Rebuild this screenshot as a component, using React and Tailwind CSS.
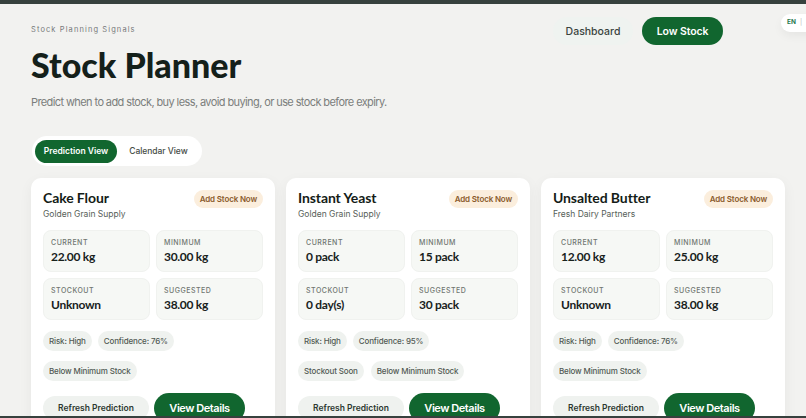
import React from 'react'

const items = [
  {
    name: 'Cake Flour', supplier: 'Golden Grain Supply', current: '22.00 kg', minimum: '30.00 kg',
    stockout: 'Unknown', suggested: '38.00 kg', confidence: '76%', soon: false,
  },
  {
    name: 'Instant Yeast', supplier: 'Golden Grain Supply', current: '0 pack', minimum: '15 pack',
    stockout: '0 day(s)', suggested: '30 pack', confidence: '95%', soon: true,
  },
  {
    name: 'Unsalted Butter', supplier: 'Fresh Dairy Partners', current: '12.00 kg', minimum: '25.00 kg',
    stockout: 'Unknown', suggested: '38.00 kg', confidence: '76%', soon: false,
  },
]

function Stat({ label, value }) {
  return (
    <div className="h-[42px] rounded-[8px] border border-[#f0f2ef] bg-[#f6f8f5] px-[7px] pt-[7px]">
      <div className="text-[7px] leading-[9px] font-medium tracking-[0.5px] text-[#6f7670]">{label}</div>
      <div className="mt-[2px] font-['Lato',sans-serif] text-[12px] leading-[16px] font-bold tracking-[-0.3px] text-[#18221c]">{value}</div>
    </div>
  )
}

function Chip({ children }) {
  return (
    <span className="flex h-[20px] items-center rounded-full bg-[#eff2ef] px-[6px] text-[8px] font-medium tracking-[-0.15px] text-[#525a54]">
      {children}
    </span>
  )
}

function Card({ item }) {
  return (
    <div className="h-[260px] w-[244px] shrink-0 rounded-[10px] bg-white px-[12px] pt-[12px] shadow-[0_4px_14px_rgba(20,40,30,0.05)]">
      <div className="flex items-start justify-between">
        <div className="font-['Lato',sans-serif] text-[14px] leading-[16px] font-bold tracking-[-0.1px] text-[#141c17]">{item.name}</div>
        <span className="flex h-[18px] items-center rounded-full bg-[#fbeedd] px-[6px] text-[8px] font-semibold tracking-[-0.15px] text-[#8a5a2c]">
          Add Stock Now
        </span>
      </div>
      <div className="text-[8.5px] leading-[12px] text-[#565e58]">{item.supplier}</div>

      <div className="mt-[10px] grid grid-cols-2 gap-[6px]">
        <Stat label="CURRENT" value={item.current} />
        <Stat label="MINIMUM" value={item.minimum} />
        <Stat label="STOCKOUT" value={item.stockout} />
        <Stat label="SUGGESTED" value={item.suggested} />
      </div>

      <div className="mt-[11px] flex gap-[6px]">
        <Chip>Risk: High</Chip>
        <Chip>Confidence: {item.confidence}</Chip>
      </div>
      <div className="mt-[10px] flex gap-[7px]">
        {item.soon && <Chip>Stockout Soon</Chip>}
        <Chip>Below Minimum Stock</Chip>
      </div>

      <div className="mt-[12px] flex items-center gap-[5px]">
        <button className="h-[24px] w-[106px] rounded-full bg-[#eff2ef] text-[8.5px] font-semibold text-[#2d3830]">
          Refresh Prediction
        </button>
        <button className="h-[30px] w-[91px] rounded-full bg-[#11662f] text-[11px] font-semibold tracking-[-0.45px] text-white">
          View Details
        </button>
      </div>
    </div>
  )
}

function App() {
  return (
    <div className="relative h-[418px] w-[806px] overflow-hidden bg-[#f2f2f0] font-['Inter',sans-serif]">
      <div className="h-[4px] bg-[#37413e]" />

      {/* language pill */}
      <div className="absolute top-[14px] left-[781px] flex h-[18px] w-[40px] items-center rounded-full bg-white pl-[6px] text-[6.5px] font-bold text-[#2a7a50] shadow-[0_4px_10px_rgba(0,0,0,0.05)]">
        EN <span className="ml-[4px] font-normal text-[#b5bab6]">|</span>
      </div>

      <div className="px-[31px]">
        <div className="flex items-start justify-between">
          <div>
            <div className="mt-[21px] text-[7.5px] leading-[10px] tracking-[1.1px] text-[#77797a]">Stock Planning Signals</div>
            <h1 className="mt-[8px] font-['Lato',sans-serif] text-[34px] leading-[44px] font-black text-[#14201a]">Stock Planner</h1>
            <p className="mt-[8px] text-[11px] leading-[14px] tracking-[-0.6px] text-[#7b7e7c]">
              Predict when to add stock, buy less, avoid buying, or use stock before expiry.
            </p>
          </div>
          <div className="mt-[13px] mr-[52px] flex items-center gap-[9px]">
            <div className="flex h-[28px] w-[80px] items-center justify-center rounded-full bg-[#eff3f0] pt-[1px] text-[10.5px] font-medium text-[#3a443e]">
              Dashboard
            </div>
            <div className="flex h-[28px] w-[81px] items-center justify-center rounded-full bg-[#11662f] pt-[1px] text-[10.5px] font-semibold tracking-[-0.1px] text-white">
              Low Stock
            </div>
          </div>
        </div>

        <div className="mt-[27px] ml-[1px] flex h-[30px] w-[170px] items-center rounded-full bg-white px-[3px]">
          <div className="flex h-[23px] w-[82px] items-center justify-center rounded-full bg-[#11662f] text-[8.5px] font-semibold text-white">
            Prediction View
          </div>
          <div className="flex-1 pl-[1px] text-center text-[8.5px] font-medium tracking-[-0.05px] text-[#444c46]">Calendar View</div>
        </div>

        <div className="mt-[12px] flex gap-[11px]">
          {items.map((item) => (
            <Card key={item.name} item={item} />
          ))}
        </div>
      </div>

      <div className="absolute inset-x-0 bottom-0 h-[2px] bg-[#37413e]" />
    </div>
  )
}

export default App
